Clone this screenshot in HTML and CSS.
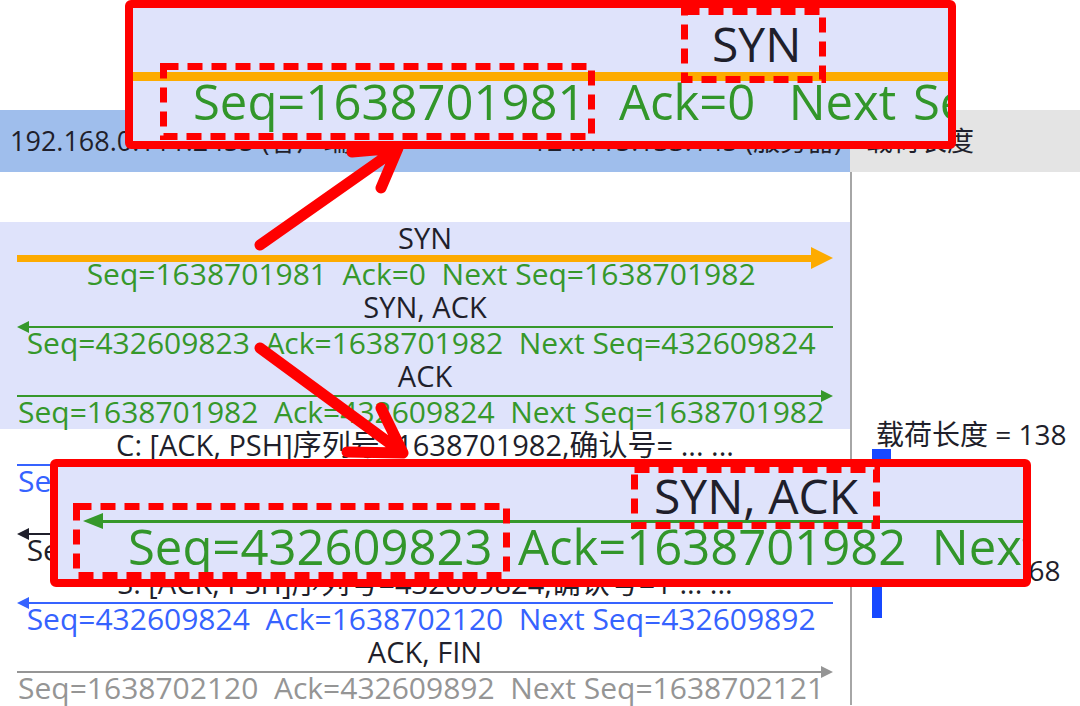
FILE: index.html
```html
<!DOCTYPE html>
<html lang="zh-CN">
<head>
    <meta charset="UTF-8">
    <meta name="viewport" content="width=device-width, initial-scale=1.0">
    <title>TCP 流图</title>
    <link rel="stylesheet" href="styles.css">
</head>
<body>
    <div class="page">
        <div class="spacer"></div>
        <div class="header">
            <div class="hdr-graph">
                <span>192.168.0.111:2455 (客户端)</span>
                <span>124.115.133.145 (服务器)</span>
            </div>
            <div class="hdr-payload">载荷长度</div>
        </div>

        <div class="main">
            <div class="graph">
                <div class="row hl">
                    <div class="label">SYN</div>
                    <div class="track orange thick"><div class="shaft"></div><div class="head-r"></div></div>
                    <div class="seq green">Seq=1638701981  Ack=0  Next Seq=1638701982 </div>
                </div>
                <div class="row hl">
                    <div class="label">SYN, ACK</div>
                    <div class="track green"><div class="head-l"></div><div class="shaft"></div></div>
                    <div class="seq green">Seq=432609823  Ack=1638701982  Next Seq=432609824 </div>
                </div>
                <div class="row hl">
                    <div class="label">ACK</div>
                    <div class="track green"><div class="shaft"></div><div class="head-r"></div></div>
                    <div class="seq green">Seq=1638701982  Ack=432609824  Next Seq=1638701982 </div>
                </div>
                <div class="row">
                    <div class="label">C: [ACK, PSH]序列号=1638701982,确认号= ... ...</div>
                    <div class="track blue"><div class="shaft"></div><div class="head-r"></div></div>
                    <div class="seq blue">Seq=1638701982  Ack=432609824  Next Seq=1638702120 </div>
                </div>
                <div class="row">
                    <div class="label">ACK</div>
                    <div class="track black"><div class="head-l"></div><div class="shaft"></div></div>
                    <div class="seq black">Seq=432609824  Ack=1638702120  Next Seq=432609824 </div>
                </div>
                <div class="row">
                    <div class="label">S: [ACK, PSH]序列号=432609824,确认号=1 ... ...</div>
                    <div class="track blue"><div class="head-l"></div><div class="shaft"></div></div>
                    <div class="seq blue">Seq=432609824  Ack=1638702120  Next Seq=432609892 </div>
                </div>
                <div class="row">
                    <div class="label">ACK, FIN</div>
                    <div class="track gray"><div class="shaft"></div><div class="head-r"></div></div>
                    <div class="seq gray">Seq=1638702120  Ack=432609892  Next Seq=1638702121 </div>
                </div>
            </div>

            <div class="payload">
                <div class="pl-label pl1">载荷长度 = 138</div>
                <div class="pl-bar bar1"></div>
                <div class="pl-label pl2">载荷长度 = 68</div>
                <div class="pl-bar bar2"></div>
            </div>
        </div>

        <!-- zoomed callouts -->
        <div class="callout c1">
            <div class="c-label">SYN</div>
            <div class="c-track orange"><div class="shaft"></div></div>
            <div class="c-seq">Seq=1638701981  Ack=0  Next Seq=1638701982</div>
        </div>
        <div class="callout c2">
            <div class="c-label">SYN, ACK</div>
            <div class="c-track green"><div class="head-l"></div><div class="shaft"></div></div>
            <div class="c-seq">Seq=432609823  Ack=1638701982  Next Seq=432609824</div>
        </div>

        <svg class="marks" width="1080" height="706" viewBox="0 0 1080 706">
            <g stroke="#ff0000" stroke-width="7" stroke-dasharray="15 9" fill="none">
                <rect x="684.5" y="11.5" width="138" height="68"/>
                <rect x="163.5" y="66.5" width="428" height="70"/>
                <rect x="634.5" y="469.5" width="242" height="56"/>
                <rect x="76.5" y="506.5" width="430" height="69"/>
            </g>
            <g stroke="#ff0000" stroke-width="11" stroke-linecap="round" stroke-linejoin="round" fill="none">
                <path d="M260 245 L398 148 M352 152 L398 148 L381 188"/>
                <path d="M260 348 L403 453 M381 408 L403 453 L347 452"/>
            </g>
        </svg>
    </div>
</body>
</html>
```

FILE: styles.css
```css
* {
    box-sizing: border-box;
}
body {
    margin: 0;
    background-color: #fff;
    font-family: "Open Sans", "Noto Sans CJK SC", sans-serif;
    color: #1f1f2b;
    overflow: hidden;
}
.page {
    position: relative;
    width: 1080px;
    height: 706px;
    overflow: hidden;
}
.spacer {
    height: 110px;
}

/* header */
.header {
    display: flex;
    height: 62px;
    font-size: 27px;
    line-height: 62px;
}
.header .hdr-graph {
    width: 850px;
    background-color: #9fbeec;
    display: flex;
    justify-content: space-between;
    padding: 0 8px 0 10px;
}
.header .hdr-payload {
    flex: 1;
    background-color: #e4e4e4;
    padding-left: 16px;
}

/* graph */
.main {
    display: flex;
}
.graph {
    width: 852px;
    border-right: 2px solid #a6a6a6;
    padding-top: 50px;
    font-size: 29px;
}
.graph .row {
    height: 69px;
    display: flex;
    flex-direction: column;
}
.graph .row.hl {
    background-color: #dfe3fb;
}
.graph .label {
    height: 31px;
    padding-top: 1px;
    line-height: 30px;
    text-align: center;
    white-space: pre;
}
.graph .track {
    height: 10px;
    margin: 0 17px;
    display: flex;
    align-items: center;
}
.graph .seq {
    font-size: 30px;
    line-height: 22px;
    text-align: center;
    white-space: pre;
}
.shaft {
    flex: 1;
    height: 2px;
    background-color: currentColor;
}
.head-r {
    border-left: 12px solid currentColor;
    border-top: 6px solid transparent;
    border-bottom: 6px solid transparent;
}
.head-l {
    border-right: 12px solid currentColor;
    border-top: 6px solid transparent;
    border-bottom: 6px solid transparent;
}
.track.thick .shaft {
    height: 7px;
}
.track.thick .head-r {
    border-left-width: 22px;
    border-top-width: 11px;
    border-bottom-width: 11px;
}

.orange { color: #fdab00; }
.green { color: #36982b; }
.blue { color: #3663ff; }
.black { color: #1f1f2b; }
.gray { color: #959595; }

/* payload column */
.payload {
    flex: 1;
    font-size: 28px;
}
.payload .pl-label {
    line-height: 30px;
    padding-left: 24px;
    white-space: pre;
}
.payload .pl1 {
    margin-top: 247px;
}
.payload .pl2 {
    margin-top: 96px;
    padding-left: 34px;
}
.payload .pl-bar {
    background-color: #1748ff;
    margin-left: 20px;
}
.payload .bar1 {
    width: 19px;
    height: 10px;
}
.payload .bar2 {
    width: 10px;
    height: 33px;
}

/* callouts */
.callout {
    position: absolute;
    border: 8px solid #ff0000;
    border-radius: 6px;
    background-color: #dfe3fb;
    overflow: hidden;
    font-size: 48px;
    display: flex;
    flex-direction: column;
}
.callout .c-label,
.callout .c-seq {
    white-space: pre;
}
.callout .c-seq {
    color: #32962a;
}
.c1 {
    left: 125px;
    top: 0;
    width: 831px;
    height: 149px;
}
.c1 .c-label {
    height: 64px;
    padding-top: 7px;
    line-height: 57px;
    padding-left: 579px;
}
.c1 .c-track {
    height: 9px;
    margin: 0 -10px;
    display: flex;
}
.c1 .c-track .shaft {
    height: 9px;
}
.c1 .c-seq {
    font-size: 49px;
    word-spacing: 4px;
    line-height: 41px;
    padding-left: 60px;
}
.c2 {
    left: 50px;
    top: 459px;
    width: 981px;
    height: 128px;
}
.c2 .c-label {
    height: 51px;
    line-height: 57px;
    padding-left: 596px;
}
.c2 .c-track {
    height: 6px;
    margin-left: 25px;
    margin-right: -50px;
    display: flex;
    align-items: center;
}
.c2 .c-track .shaft {
    height: 3px;
}
.c2 .c-track .head-l {
    border-right-width: 20px;
    border-top-width: 8px;
    border-bottom-width: 8px;
}
.c2 .c-seq {
    font-size: 49px;
    line-height: 45px;
    padding-left: 70px;
}

.marks {
    position: absolute;
    left: 0;
    top: 0;
    pointer-events: none;
}
```
